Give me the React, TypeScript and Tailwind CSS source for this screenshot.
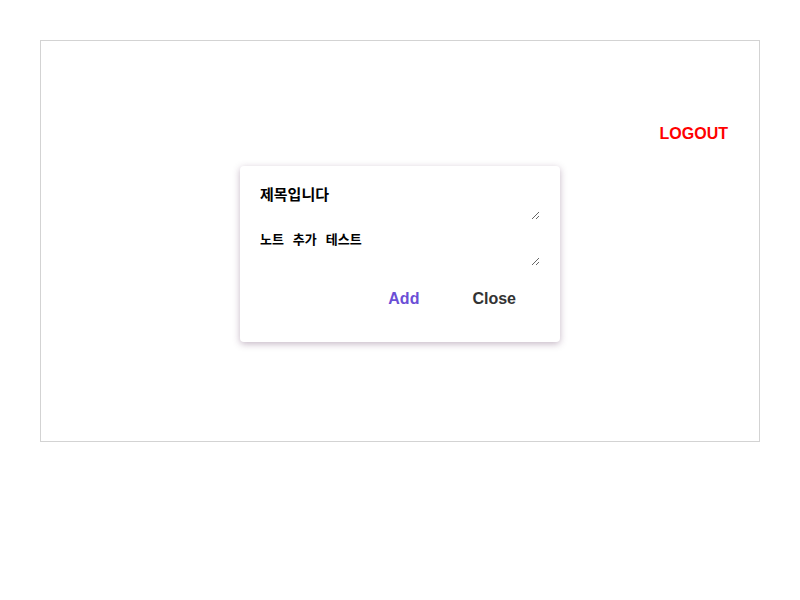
import { useEffect, useRef } from "react";

const NoteModal = () => {
  const bodyRef = useRef<HTMLTextAreaElement>(null);

  useEffect(() => {
    const el = bodyRef.current;
    if (el) {
      el.focus();
      el.setSelectionRange(el.value.length, el.value.length);
    }
  }, []);

  return (
    <div className="w-[320px] rounded-[4px] bg-white px-[20px] pt-[16px] pb-[31px] shadow-[0_2px_7px_rgba(90,50,90,0.35)]">
      <textarea
        defaultValue="제목입니다"
        className="block h-[38px] w-full resize border-none bg-transparent pt-[2px] text-[15px] leading-[20px] font-bold text-black outline-none"
        style={{ fontFamily: '"Noto Sans CJK KR", sans-serif' }}
      />
      <textarea
        ref={bodyRef}
        defaultValue="노트 추가 테스트"
        className="mt-[8px] block h-[38px] w-full resize border-none bg-transparent pt-[2px] text-[13px] leading-[18px] font-bold text-black caret-black outline-none [word-spacing:6px]"
        style={{ fontFamily: '"Noto Sans CJK KR", sans-serif' }}
      />
      <div className="mt-[21px] flex justify-end gap-[53px] pr-[24px] font-['Liberation_Sans',sans-serif] text-[16px] font-bold">
        <button className="text-[#6b4fd6]">Add</button>
        <button className="text-[#333333]">Close</button>
      </div>
    </div>
  );
};

const App = () => {
  return (
    <div className="min-h-screen bg-white pt-[40px]">
      <div className="mx-[40px] h-[402px] border border-[#d3d3d3]">
        <div className="flex justify-end pt-[84px] pr-[31px]">
          <button className="font-['Liberation_Sans',sans-serif] text-[16px] leading-[18px] font-bold text-[#ff0000]">
            LOGOUT
          </button>
        </div>
        <div className="mt-[23px] flex justify-center">
          <NoteModal />
        </div>
      </div>
    </div>
  );
};

export default App;
